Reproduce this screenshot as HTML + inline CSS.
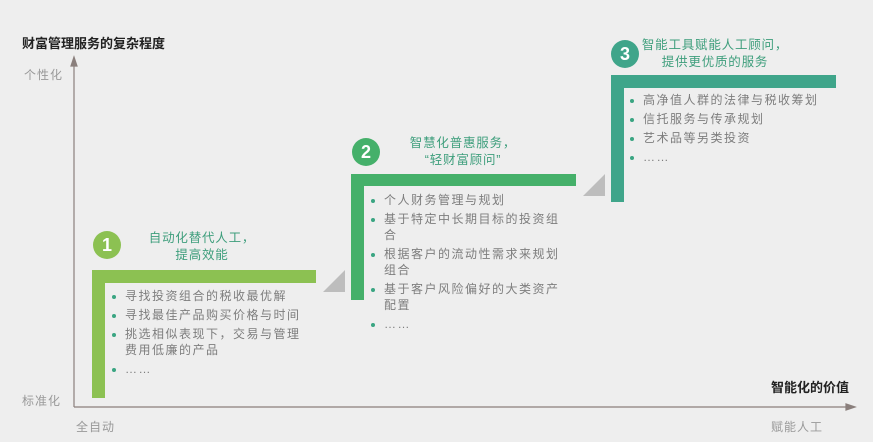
<!DOCTYPE html>
<html><head><meta charset="utf-8"><style>
body{margin:0;width:873px;height:442px;background:#eeeeee;position:relative;overflow:hidden;font-family:"Liberation Sans","Noto Sans CJK SC",sans-serif}
.a{position:absolute}
.lbl{color:#999;font-size:12px;letter-spacing:1px}
.circ{width:28px;height:28px;border-radius:50%;color:#fff;font-weight:bold;font-size:18px;text-align:center;line-height:28px}
.t{color:#3e9e7c;font-size:12.5px;text-align:center;line-height:17px;width:200px;letter-spacing:0.8px}
ul{margin:0;padding:0;list-style:none;color:#7d7d7d;font-size:12px;line-height:16px;width:196px;letter-spacing:1.5px}
li{position:relative;padding-left:14px;margin-bottom:3px}
li:before{content:"";position:absolute;left:1px;top:7px;width:4px;height:4px;border-radius:50%;background:#3aa582}
.tri{width:0;height:0;border-left:22px solid transparent;border-bottom:22px solid #bdbdbd}
</style></head><body>
<div class="a" style="left:22px;top:33px;font-size:13px;font-weight:bold;color:#222">财富管理服务的复杂程度</div>
<div class="a lbl" style="left:24px;top:66px">个性化</div>
<div class="a lbl" style="left:22px;top:392px">标准化</div>
<div class="a lbl" style="left:76px;top:418px">全自动</div>
<div class="a lbl" style="left:771px;top:418px">赋能人工</div>
<div class="a" style="left:771px;top:377px;font-size:13px;font-weight:bold;color:#222">智能化的价值</div>
<svg class="a" style="left:0;top:0" width="873" height="442"><g stroke="#8a7f7c" stroke-width="1.2" fill="#8a7f7c"><line x1="74" y1="62" x2="74" y2="407"/><line x1="74" y1="407" x2="850" y2="407"/><path d="M74 57 L71 66 L77 66Z"/><path d="M855 407 L846 404 L846 410Z"/></g></svg>

<div class="a" style="left:92px;top:270px;width:224px;height:13px;background:#8cc152"></div>
<div class="a" style="left:92px;top:270px;width:13px;height:128px;background:#8cc152"></div>
<div class="a tri" style="left:323px;top:270px"></div>
<div class="a circ" style="left:93px;top:231px;background:#8cc152">1</div>
<div class="a t" style="left:102px;top:230px">自动化替代人工，<br>提高效能</div>
<ul class="a" style="left:111px;top:288px"><li>寻找投资组合的税收最优解</li><li>寻找最佳产品购买价格与时间</li><li>挑选相似表现下，交易与管理费用低廉的产品</li><li>……</li></ul>

<div class="a" style="left:351px;top:174px;width:225px;height:12px;background:#45b06a"></div>
<div class="a" style="left:351px;top:174px;width:13px;height:126px;background:#45b06a"></div>
<div class="a tri" style="left:583px;top:174px"></div>
<div class="a circ" style="left:352px;top:138px;background:#45b06a">2</div>
<div class="a t" style="left:363px;top:135px">智慧化普惠服务，<br>“轻财富顾问”</div>
<ul class="a" style="left:370px;top:192px"><li>个人财务管理与规划</li><li>基于特定中长期目标的投资组合</li><li>根据客户的流动性需求来规划组合</li><li>基于客户风险偏好的大类资产配置</li><li>……</li></ul>

<div class="a" style="left:611px;top:75px;width:225px;height:13px;background:#3fa58a"></div>
<div class="a" style="left:611px;top:75px;width:13px;height:127px;background:#3fa58a"></div>
<div class="a circ" style="left:611px;top:40px;background:#3fa58a">3</div>
<div class="a t" style="left:615px;top:37px">智能工具赋能人工顾问，<br>提供更优质的服务</div>
<ul class="a" style="left:629px;top:92px"><li>高净值人群的法律与税收筹划</li><li>信托服务与传承规划</li><li>艺术品等另类投资</li><li>……</li></ul>
</body></html>
